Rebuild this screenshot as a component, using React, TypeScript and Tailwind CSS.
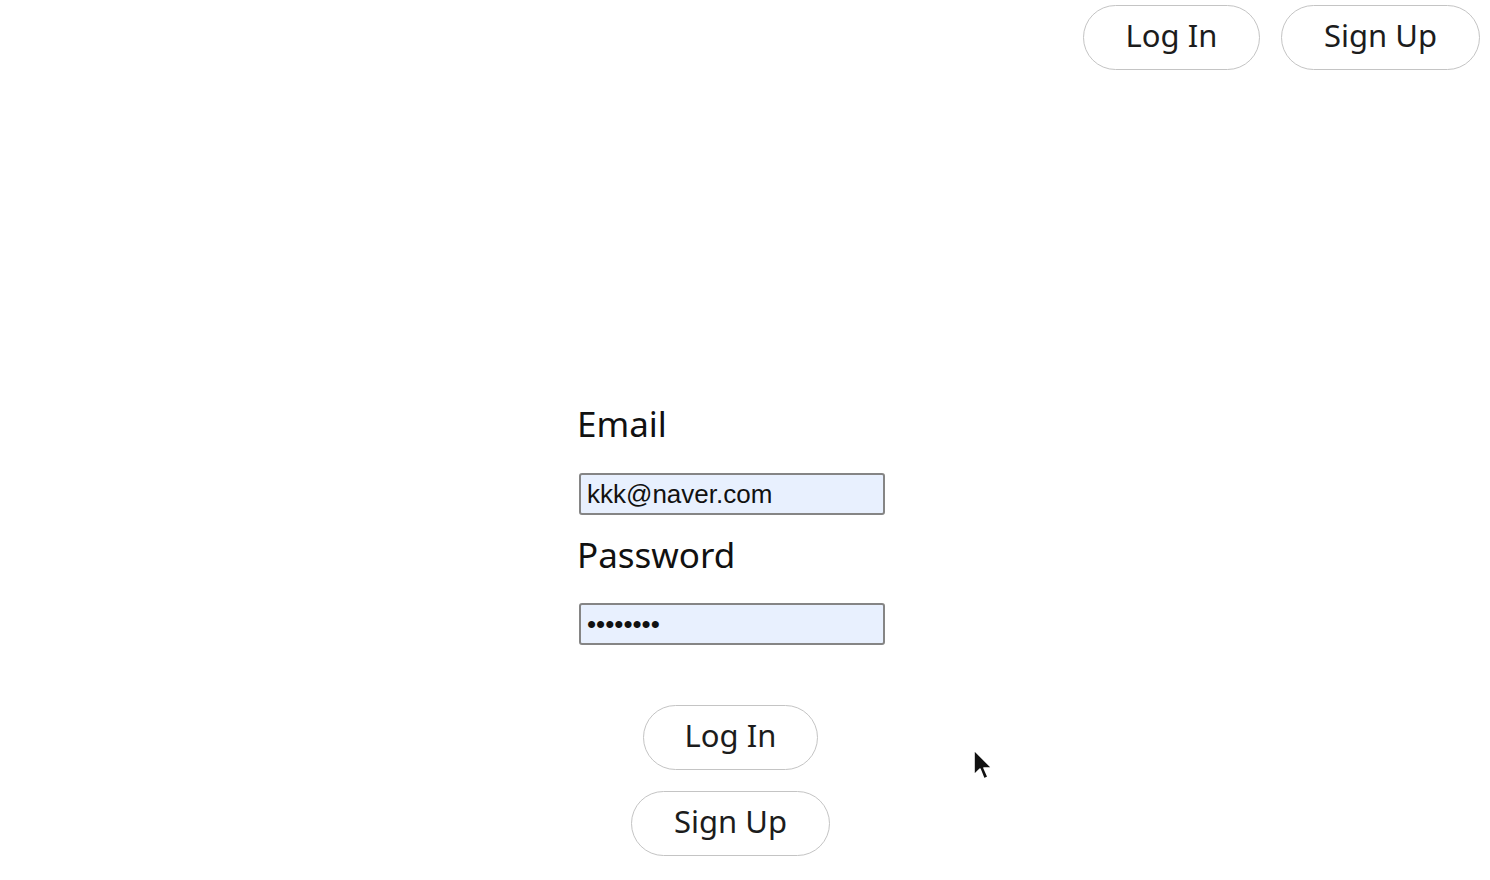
import React from "react";

function PillButton({ label, width }: { label: string; width: string }) {
  return (
    <button
      type="button"
      className={`${width} h-[65px] rounded-full border-[1.5px] border-[#c4c4c4] bg-white text-[31px] text-[#1c1c1c] flex items-center justify-center pb-[4px]`}
    >
      {label}
    </button>
  );
}

export default function App() {
  return (
    <div
      className="min-h-screen bg-white relative"
      style={{ fontFamily: '"Noto Sans", "Noto Sans CJK KR", sans-serif' }}
    >
      <header className="flex justify-end gap-[21px] pt-[5px] pr-[10px]">
        <PillButton label="Log In" width="w-[177px]" />
        <PillButton label="Sign Up" width="w-[199px]" />
      </header>

      <main className="flex justify-center pr-[26px] pt-[332px]">
        <form className="w-[306px] flex flex-col" onSubmit={(e) => e.preventDefault()}>
          <label className="text-[35px] leading-[44px] text-[#111] -ml-[2px] mb-[27px]">Email</label>
          <input
            type="email"
            defaultValue="kkk@naver.com"
            className="h-[42px] w-full rounded-[3px] border-2 border-[#858585] bg-[#e8f0fe] pl-[6px] text-[26px] text-[#111] outline-none mb-[18px]"
            style={{ fontFamily: '"Liberation Sans", Arial, sans-serif' }}
          />
          <label className="text-[35px] leading-[44px] text-[#111] -ml-[2px] mb-[26px]">Password</label>
          <input
            type="password"
            defaultValue="12345678"
            className="h-[42px] w-full rounded-[3px] border-2 border-[#858585] bg-[#e8f0fe] pl-[6px] text-[26px] text-[#111] outline-none"
            style={{ fontFamily: '"Liberation Sans", Arial, sans-serif' }}
          />
          <div className="flex flex-col items-center gap-[21px] mt-[60px] pr-[3px]">
            <PillButton label="Log In" width="w-[175px]" />
            <PillButton label="Sign Up" width="w-[199px]" />
          </div>
        </form>
      </main>

      {/* mouse pointer from the capture */}
      <svg
        className="absolute left-[972px] top-[749px]"
        width="22"
        height="34"
        viewBox="0 0 22 34"
      >
        <path
          d="M2 1 L2 26 L8 20 L12 30 L16 28 L12 19 L20 19 Z"
          fill="#111"
          stroke="#fff"
          strokeWidth="1.6"
          strokeLinejoin="round"
        />
      </svg>
    </div>
  );
}
